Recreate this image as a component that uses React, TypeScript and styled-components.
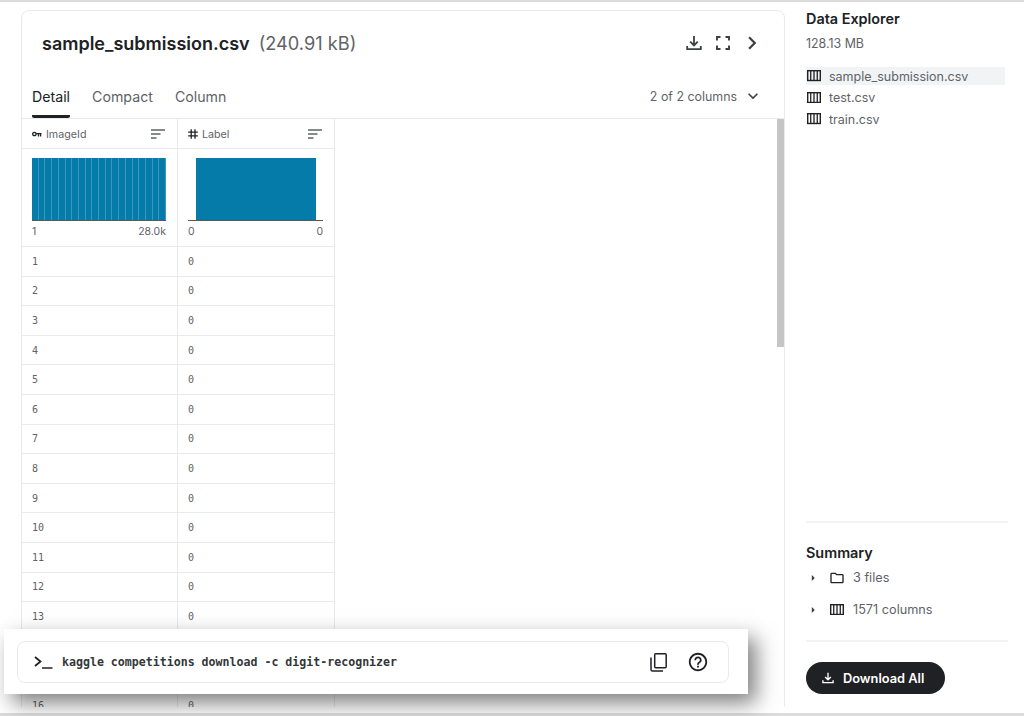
import styled, { createGlobalStyle } from 'styled-components'
import { MdChevronRight, MdExpandMore, MdHelpOutline, MdOutlineFolder, MdArrowRight } from 'react-icons/md'

const colors = {
  ink: '#202124',
  grey: '#5f6368',
  soft: '#80868b',
  line: '#e8eaed',
  bar: '#047ba8',
}

const GlobalStyle = createGlobalStyle`
  html, body {
    margin: 0;
    padding: 0;
    overflow: hidden;
    background: #fff;
    font-family: Inter, "Liberation Sans", sans-serif;
  }
`

const ColumnsIcon = ({ size = 14 }: { size?: number }) => (
  <svg width={size} height={size * 0.8} viewBox="0 0 15 12" fill="none">
    <rect x="0.75" y="0.75" width="13.5" height="10.5" stroke={colors.ink} strokeWidth="1.5" />
    <path d="M4 1v10M7.5 1v10M11 1v10" stroke={colors.ink} strokeWidth="1.4" />
  </svg>
)

const SortIcon = () => (
  <svg width="14" height="10" viewBox="0 0 14 10" fill="none">
    <path d="M0 1h14M0 5h9.5M0 9h5.5" stroke={colors.grey} strokeWidth="1.3" />
  </svg>
)

const KeyIcon = () => (
  <svg width="10" height="6" viewBox="0 0 10 6" fill="none">
    <circle cx="2.4" cy="3" r="1.7" stroke={colors.ink} strokeWidth="1.3" />
    <path d="M4 2.6h5.5M6.5 3v2.4M8.6 3v2.4" stroke={colors.ink} strokeWidth="1.3" />
  </svg>
)

const HashIcon = () => (
  <svg width="10" height="10" viewBox="0 0 10 10" fill="none">
    <path d="M3.2 0.3v9.4M7 0.3v9.4M0.2 3.2h9.6M0.2 6.8h9.6" stroke={colors.ink} strokeWidth="1.3" />
  </svg>
)

const DownloadIcon = ({ size = 16, color = '#3c4043' }: { size?: number; color?: string }) => (
  <svg width={size} height={size} viewBox="0 0 16 16" fill="none">
    <path d="M8 1v9M4.2 6.6 8 10.4l3.8-3.8" stroke={color} strokeWidth="1.8" />
    <path d="M1.2 11v3.2h13.6V11" stroke={color} strokeWidth="1.8" />
  </svg>
)

const FullscreenIcon = () => (
  <svg width="14" height="14" viewBox="0 0 14 14" fill="none">
    <path d="M1 4.5V1h3.5M9.5 1H13v3.5M13 9.5V13H9.5M4.5 13H1V9.5" stroke="#3c4043" strokeWidth="1.9" />
  </svg>
)

const TerminalIcon = () => (
  <svg width="19" height="13" viewBox="0 0 19 13" fill="none">
    <path d="M1 1l5.5 4.5L1 10" stroke={colors.ink} strokeWidth="1.8" />
    <path d="M8 12h10.5" stroke={colors.ink} strokeWidth="1.5" />
  </svg>
)

const CopyIcon = () => (
  <svg width="17" height="19" viewBox="0 0 17 19" fill="none">
    <rect x="4.7" y="0.8" width="11.5" height="14" rx="1" stroke={colors.ink} strokeWidth="1.5" />
    <path d="M1 4.5V16.6c0 .9.6 1.5 1.5 1.5H13" stroke={colors.ink} strokeWidth="1.5" />
  </svg>
)

const rows = Array.from({ length: 16 }, (_, i) => i + 1)
const stripes = Array.from({ length: 20 }, (_, i) => i)
const files = ['sample_submission.csv', 'test.csv', 'train.csv']

export default function App() {
  return (
    <>
      <GlobalStyle />
      <Frame>
        <Edge $height={2} />
        <Body>
          <Card>
            <CardHeader>
              <TitleGroup>
                <FileName>sample_submission.csv</FileName>
                <FileSize>(240.91 kB)</FileSize>
              </TitleGroup>
              <HeaderActions>
                <DownloadIcon />
                <FullscreenIcon />
                <ChevronSlot>
                  <MdChevronRight size={26} color="#3c4043" />
                </ChevronSlot>
              </HeaderActions>
            </CardHeader>
            <TabBar>
              <Tabs>
                <Tab $active>Detail</Tab>
                <Tab>Compact</Tab>
                <Tab>Column</Tab>
              </Tabs>
              <ColumnPicker>
                2 of 2 columns
                <MdExpandMore size={20} color="#3c4043" />
              </ColumnPicker>
            </TabBar>
            <TableArea>
              <Table>
                <HeadCell>
                  <HeadLabel>
                    <KeyIcon />
                    ImageId
                  </HeadLabel>
                  <SortIcon />
                </HeadCell>
                <HeadCell>
                  <HeadLabel>
                    <HashIcon />
                    Label
                  </HeadLabel>
                  <SortIcon />
                </HeadCell>
                <ChartCell>
                  <Plot>
                    <StripedBars>
                      {stripes.map((s) => (
                        <Stripe key={s} />
                      ))}
                    </StripedBars>
                  </Plot>
                  <Range>
                    <span>1</span>
                    <span>28.0k</span>
                  </Range>
                </ChartCell>
                <ChartCell>
                  <Plot>
                    <SolidBar />
                  </Plot>
                  <Range>
                    <span>0</span>
                    <span>0</span>
                  </Range>
                </ChartCell>
                {rows.map((r) => (
                  <Row key={r}>
                    <ValueCell>{r}</ValueCell>
                    <ValueCell>0</ValueCell>
                  </Row>
                ))}
              </Table>
              <ScrollThumb />
            </TableArea>
          </Card>
          <Sidebar>
            <SideTitle>Data Explorer</SideTitle>
            <SideSize>128.13 MB</SideSize>
            <FileList>
              {files.map((f, i) => (
                <FileRow key={f} $selected={i === 0}>
                  <ColumnsIcon />
                  {f}
                </FileRow>
              ))}
            </FileList>
            <SummaryBlock>
              <SideTitle>Summary</SideTitle>
              <SummaryRows>
                <SummaryRow>
                  <MdArrowRight size={14} color="#3c4043" />
                  <SummaryIcon>
                    <MdOutlineFolder size={18} color={colors.ink} />
                  </SummaryIcon>
                  3 files
                </SummaryRow>
                <SummaryRow>
                  <MdArrowRight size={14} color="#3c4043" />
                  <SummaryIcon>
                    <ColumnsIcon />
                  </SummaryIcon>
                  1571 columns
                </SummaryRow>
              </SummaryRows>
            </SummaryBlock>
            <DownloadBlock>
              <DownloadButton>
                <DownloadIcon size={12} color="#fff" />
                Download All
              </DownloadButton>
            </DownloadBlock>
          </Sidebar>
        </Body>
        <Edge $height={3} />
        <CommandPanel>
          <CommandBox>
            <TerminalIcon />
            <Command>kaggle competitions download -c digit-recognizer</Command>
            <CommandActions>
              <CopyIcon />
              <MdHelpOutline size={22} color={colors.ink} />
            </CommandActions>
          </CommandBox>
        </CommandPanel>
      </Frame>
    </>
  )
}

const Frame = styled.div`
  position: relative;
  display: flex;
  flex-direction: column;
  width: 1024px;
  height: 716px;
  overflow: hidden;
`
const Edge = styled.div<{ $height: number }>`
  flex: 0 0 ${(props) => props.$height}px;
  background: #dcdcdc;
`
const Body = styled.div`
  flex: 1;
  display: flex;
  min-height: 0;
  margin-bottom: 6px;
  padding: 8px 16px 0 21px;
  overflow: hidden;
`
const Card = styled.div`
  width: 764px;
  height: 720px;
  box-sizing: border-box;
  flex-shrink: 0;
  border: 1px solid ${colors.line};
  border-radius: 8px 8px 0 0;
`
const CardHeader = styled.div`
  display: flex;
  align-items: center;
  justify-content: space-between;
  height: 63px;
  padding: 1px 19px 0 20px;
  box-sizing: border-box;
`
const TitleGroup = styled.div`
  display: flex;
  align-items: baseline;
  gap: 9px;
`
const FileName = styled.span`
  color: ${colors.ink};
  font-size: 18px;
  font-weight: 600;
`
const FileSize = styled.span`
  color: ${colors.grey};
  font-size: 18.2px;
`
const HeaderActions = styled.div`
  display: flex;
  align-items: center;
  gap: 14px;
`
const ChevronSlot = styled.div`
  display: flex;
  margin-left: -5px;
`
const TabBar = styled.div`
  display: flex;
  align-items: flex-start;
  justify-content: space-between;
  height: 44px;
  padding: 0 21px 0 10px;
  border-bottom: 1px solid ${colors.line};
`
const Tabs = styled.div`
  display: flex;
  gap: 22px;
`
const Tab = styled.div<{ $active?: boolean }>`
  height: 44px;
  box-sizing: border-box;
  padding-top: 14px;
  color: ${(props) => (props.$active ? colors.ink : colors.grey)};
  font-size: 14.2px;
  border-bottom: ${(props) => (props.$active ? `3px solid ${colors.ink}` : 'none')};
  border-radius: 0 0 2px 2px;
`
const ColumnPicker = styled.div`
  display: flex;
  align-items: center;
  gap: 6px;
  height: 44px;
  color: ${colors.grey};
  font-size: 12.4px;
`
const TableArea = styled.div`
  display: flex;
  justify-content: space-between;
`
const Table = styled.div`
  display: grid;
  grid-template-columns: 156px 157px;
  align-content: start;
`
const HeadCell = styled.div`
  display: flex;
  align-items: center;
  justify-content: space-between;
  height: 30px;
  box-sizing: border-box;
  padding: 1px 12px 0 10px;
  border-bottom: 1px solid ${colors.line};
  border-right: 1px solid ${colors.line};
`
const HeadLabel = styled.div`
  display: flex;
  align-items: center;
  gap: 4px;
  color: ${colors.grey};
  font-size: 10.7px;
`
const ChartCell = styled.div`
  display: flex;
  flex-direction: column;
  height: 98px;
  box-sizing: border-box;
  padding: 9px 11px 0 10px;
  border-bottom: 1px solid ${colors.line};
  border-right: 1px solid ${colors.line};
`
const Plot = styled.div`
  display: flex;
  justify-content: center;
  height: 62px;
  border-bottom: 1px solid #55595e;
`
const StripedBars = styled.div`
  flex: 1;
  display: flex;
`
const Stripe = styled.div`
  flex: 1;
  background: ${colors.bar};
  border-right: 1px solid #3b97bb;
`
const SolidBar = styled.div`
  width: 120px;
  background: ${colors.bar};
`
const Range = styled.div`
  display: flex;
  justify-content: space-between;
  margin-top: 4px;
  color: ${colors.grey};
  font-size: 10.5px;
`
const Row = styled.div`
  display: contents;
`
const ValueCell = styled.div`
  display: flex;
  align-items: center;
  height: 29.6px;
  box-sizing: border-box;
  padding-left: 10px;
  border-bottom: 1px solid ${colors.line};
  border-right: 1px solid ${colors.line};
  color: ${colors.grey};
  font-family: "DejaVu Sans Mono", monospace;
  font-size: 10px;
`
const ScrollThumb = styled.div`
  width: 7px;
  height: 228px;
  background: #c6c6c6;
`
const Sidebar = styled.div`
  flex: 1;
  display: flex;
  flex-direction: column;
  margin-left: 21px;
`
const SideTitle = styled.div`
  color: ${colors.ink};
  font-size: 14.4px;
  font-weight: 600;
  line-height: 17px;
`
const SideSize = styled.div`
  margin-top: 9px;
  color: ${colors.grey};
  font-size: 12.4px;
`
const FileList = styled.div`
  display: flex;
  flex-direction: column;
  gap: 3.5px;
  margin-top: 16px;
`
const FileRow = styled.div<{ $selected?: boolean }>`
  display: flex;
  align-items: center;
  gap: 8px;
  width: 199px;
  height: 18px;
  padding-left: 1px;
  box-sizing: border-box;
  background: ${(props) => (props.$selected ? '#f1f3f4' : 'transparent')};
  color: ${colors.grey};
  font-size: 12.5px;
`
const SummaryBlock = styled.div`
  display: flex;
  flex-direction: column;
  margin-top: auto;
  padding: 21px 0 18px;
  border-top: 2px solid #f1f3f4;
`
const SummaryRows = styled.div`
  display: flex;
  flex-direction: column;
  gap: 7px;
  margin-top: 4px;
`
const SummaryRow = styled.div`
  display: flex;
  align-items: center;
  gap: 8px;
  height: 25px;
  color: ${colors.grey};
  font-size: 12.7px;
`
const SummaryIcon = styled.div`
  display: flex;
  align-items: center;
  justify-content: center;
  width: 16px;
  margin-left: 1px;
`
const DownloadBlock = styled.div`
  padding: 20px 0 13px;
  border-top: 2px solid #f1f3f4;
`
const DownloadButton = styled.div`
  display: inline-flex;
  align-items: center;
  gap: 9px;
  height: 32px;
  padding: 0 21px 0 16px;
  border-radius: 16px;
  background: ${colors.ink};
  color: #fff;
  font-size: 12.8px;
  font-weight: 600;
`
const CommandPanel = styled.div`
  position: absolute;
  left: 4px;
  top: 629px;
  width: 744px;
  height: 65px;
  box-sizing: border-box;
  padding: 12px 19px 11px 13px;
  background: #fff;
  box-shadow: 8px 9px 20px rgba(0, 0, 0, 0.5);
`
const CommandBox = styled.div`
  display: flex;
  align-items: center;
  height: 100%;
  box-sizing: border-box;
  padding: 0 19px 0 16px;
  border: 1px solid ${colors.line};
  border-radius: 8px;
`
const Command = styled.div`
  flex: 1;
  margin-left: 9px;
  color: #33363a;
  font-family: "DejaVu Sans Mono", monospace;
  font-size: 11.6px;
  font-weight: 700;
`
const CommandActions = styled.div`
  display: flex;
  align-items: center;
  gap: 20px;
`
